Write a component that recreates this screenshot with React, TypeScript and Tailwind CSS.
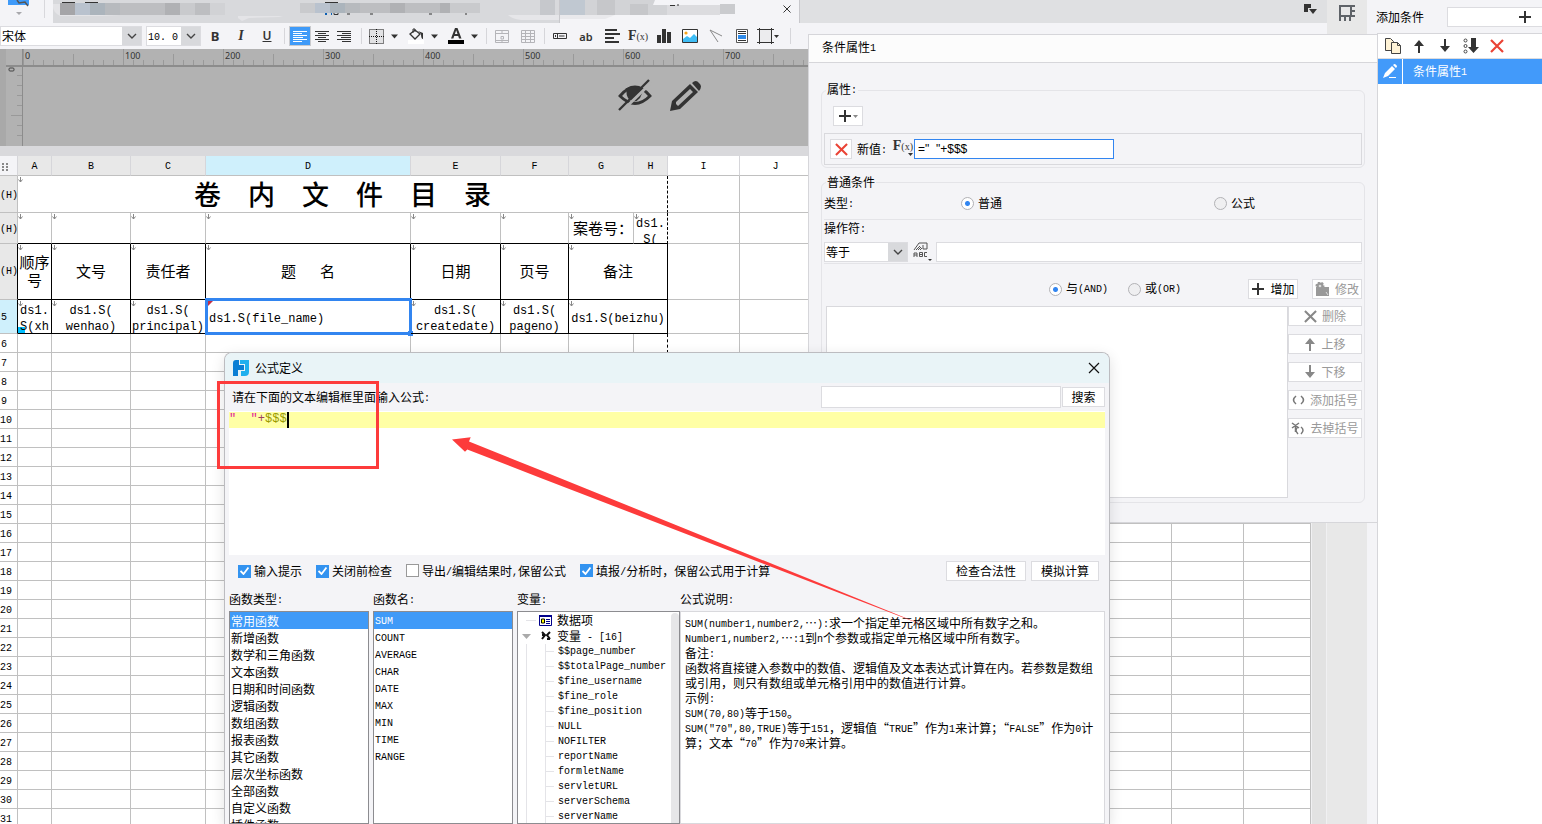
import { useState } from "react";
import type { ReactNode } from "react";

const columns = ["A", "B", "C", "D", "E", "F", "G", "H", "I", "J", "", "", "", "", "", "", ""];
const columnWidths = [34, 79, 75, 205, 90, 68, 65, 34, 72, 72, 72, 72, 72, 72, 72, 72];
const plainRows = Array.from({ length: 26 }, (_, i) => i + 6);

const categories = [
  "常用函数",
  "新增函数",
  "数学和三角函数",
  "文本函数",
  "日期和时间函数",
  "逻辑函数",
  "数组函数",
  "报表函数",
  "其它函数",
  "层次坐标函数",
  "全部函数",
  "自定义函数",
  "插件函数",
];

const functionNames = ["SUM", "COUNT", "AVERAGE", "CHAR", "DATE", "MAX", "MIN", "TIME", "RANGE"];

const variables = [
  "$$page_number",
  "$$totalPage_number",
  "$fine_username",
  "$fine_role",
  "$fine_position",
  "NULL",
  "NOFILTER",
  "reportName",
  "formletName",
  "servletURL",
  "serverSchema",
  "serverName",
];

const description = [
  "SUM(number1,number2,…):求一个指定单元格区域中所有数字之和。",
  "Number1,number2,…:1到n个参数或指定单元格区域中所有数字。",
  "备注:",
  "函数将直接键入参数中的数值、逻辑值及文本表达式计算在内。若参数是数组",
  "或引用，则只有数组或单元格引用中的数值进行计算。",
  "示例:",
  "SUM(70,80)等于150。",
  "SUM(\"70\",80,TRUE)等于151，逻辑值“TRUE”作为1来计算；“FALSE”作为0计",
  "算；文本“70”作为70来计算。",
];

// Latin runs go in a half-width monospace face, the rest stays in the CJK one
function Mix({ text }: { text: string }) {
  return (
    <>
      {text.split(/([\x20-\x7e]+)/).map((part, i) =>
        i % 2 ? (
          <span key={i} className="align-[1px] font-['Liberation_Mono',monospace] text-[10px]">
            {part}
          </span>
        ) : (
          part
        ),
      )}
    </>
  );
}

function Chevron() {
  return (
    <svg width="10" height="6" viewBox="0 0 10 6" fill="none" stroke="#444" strokeWidth="1.4">
      <path d="M1 1l4 4 4-4" />
    </svg>
  );
}

function Caret() {
  return (
    <svg width="7" height="5" viewBox="0 0 7 5" fill="#333">
      <path d="M0 .5h7L3.500 4.500z" />
    </svg>
  );
}

function ArrowIcon({ down, color }: { down?: boolean; color: string }) {
  return (
    <svg width="12" height="14" viewBox="0 0 12 14" fill={color}>
      {down ? <path d="M5 0h2v7h4L6 13 1 7h4z" /> : <path d="M5 14h2V7h4L6 1 1 7h4z" />}
    </svg>
  );
}

function CrossIcon({ color, size }: { color: string; size: number }) {
  return (
    <svg width={size} height={size} viewBox="0 0 14 14" fill="none" stroke={color} strokeWidth="2.200">
      <path d="M1 1l12 12M13 1L1 13" />
    </svg>
  );
}

function PlusIcon() {
  return (
    <svg width="14" height="14" viewBox="0 0 14 14" fill="#333">
      <path d="M6 1h2v5h5v2H8v5H6V8H1V6h5z" />
    </svg>
  );
}

function FxIcon() {
  return (
    <span className="flex items-baseline font-['Liberation_Serif',serif] leading-none text-[#333]">
      <b className="text-sm leading-none">F</b>
      <span className="text-[10px] leading-none">(x)</span>
    </span>
  );
}

function CellMark() {
  return (
    <svg className="absolute left-0 top-px" width="5" height="6" viewBox="0 0 5 6" fill="none" stroke="#888">
      <path d="M2.500 0v5M.5 2.500l2 2.500 2-2.500" />
    </svg>
  );
}

function Separator({ className }: { className: string }) {
  return <span className={`h-4 w-px shrink-0 bg-[#d6d6da] ${className}`} />;
}

function Tool({ label, children }: { label: string; children: ReactNode }) {
  return (
    <button aria-label={label} className="flex h-5 w-[26px] shrink-0 items-center justify-center">
      {children}
    </button>
  );
}

function DropTool({ label, children }: { label: string; children: ReactNode }) {
  return (
    <button aria-label={label} className="flex h-5 w-9 shrink-0 items-center">
      <span className="flex w-5 justify-center">{children}</span>
      <span className="flex w-4 justify-center">
        <Caret />
      </span>
    </button>
  );
}

function Combo({ label, value, latin, className }: { label: string; value: string; latin?: boolean; className: string }) {
  return (
    <div className={`relative h-5 shrink-0 border border-[#dcdce0] bg-white ${className}`}>
      <select
        aria-label={label}
        className={`h-full w-full appearance-none bg-transparent pl-px outline-none ${
          latin ? "font-['Liberation_Mono',monospace] text-[10px]" : "text-xs"
        }`}
      >
        <option>{value}</option>
      </select>
      <span className="pointer-events-none absolute inset-y-0 right-0 flex w-[19px] items-center justify-center bg-[#d8d9dc]">
        <Chevron />
      </span>
    </div>
  );
}

function TabStrip() {
  return (
    <div className="flex h-[23px] shrink-0 bg-[#dfe0e2]">
      <div className="w-[53px] bg-[#f4f4f7]">
        <svg width="53" height="23" viewBox="0 0 53 23">
          <path d="M8 0h21v5H8z" fill="#3f9af8" />
          <path d="M17 0l2 3 6-1 3 4" fill="none" stroke="#555" strokeWidth="1.500" />
          <path d="M16 12h6l-3 3z" fill="#a8a8ac" />
          <path d="M44 0h1v18h-1z" fill="#d8d8dc" />
        </svg>
      </div>
      <div className="w-[507px] border-r border-[#c8c8cc] bg-[#d8d9dc]">
        <svg width="506" height="23" viewBox="53 0 506 23">
          <path d="M53 4h7v11h40l20 1H60q-7-4-7-9z" fill="#e4e4e7" />
          <path d="M62 2h13v1H62zM85 2h13v1H85zM325 2h13v1H325z" fill="#333" />
          <path d="M325 13h2v2h-2zM331 13h1v2h-1z" fill="#0a5fb4" />
          <path d="M334 13v1.500h4V13M347 14h3M370 14h3M429 14h3M466 13v2" stroke="#333" fill="none" />
          <path d="M238 16h45l-4 1-30 1-7 3-4-3z" fill="#e4e4e7" />
          <path d="M60 3h15v12H60z" fill="#a5a5a8" />
          <path d="M75 3h15v12H75zM315 3h15v10H315z" fill="#b9c2ce" />
          <path d="M90 3h15v12H90zM330 3h15v10H330z" fill="#abb4bc" />
          <path d="M105 3h15v12H105zM345 3h15v10H345z" fill="#b7babe" />
          <path d="M120 3h45v12H120zM195 3h15v12H195zM360 3h30v10H360zM405 3h35v10H405z" fill="#bdbec1" />
          <path d="M165 3h15v12H165zM390 3h15v10H390zM440 3h10v10H440z" fill="#b0b1b4" />
          <path d="M180 3h15v12H180zM300 3h15v10H300zM450 3h30v10H450z" fill="#c9cacd" />
          <path d="M210 3h15v12H210z" fill="#d1d2d5" />
          <path d="M540 0h15v15H540z" fill="#c6c8cc" />
          <path d="M508 15h51v5h-38q-9-1-13-5z" fill="#e6e6e9" />
        </svg>
      </div>
      <div className="flex w-[240px] border-r border-[#c8c8cc] bg-[#f4f4f7]">
        <svg width="223" height="23" viewBox="560 0 223 23">
          <path d="M560 0h95l-2 5h14v10H560z" fill="#d2d3d6" />
          <path d="M560 0h25v15h-25z" fill="#c0c8d1" />
          <path d="M597 0h18v15h-18zM630 4h18v11h-18z" fill="#c6c7ca" />
          <path d="M667 5h53v10h-53z" fill="#dcdcdf" />
          <path d="M720 4h15v10h-15z" fill="#cacbce" />
          <path d="M560 15h55l-10 4h-45z" fill="#e9e9ec" />
          <path d="M670 5.500h5M678 4v2" stroke="#333" />
        </svg>
        <button aria-label="关闭标签" className="flex h-[18px] items-center">
          <svg width="8" height="8" viewBox="0 0 8 8" fill="none" stroke="#333">
            <path d="M.5.5l7 7M7.500.5l-7 7" />
          </svg>
        </button>
      </div>
      <button aria-label="标签列表" className="ml-auto mr-[10px] flex h-[18px] items-center">
        <svg width="13" height="11" viewBox="0 0 13 11" fill="#333">
          <path d="M0 0h7v4H4v4H0z" />
          <path d="M5 5h8L9 10z" />
        </svg>
      </button>
    </div>
  );
}

function Toolbar() {
  return (
    <div className="flex h-[26px] shrink-0 items-center bg-[#f4f4f7]">
      <Combo label="字体" value="宋体" className="w-[142px]" />
      <Combo label="字号" value="10. 0" latin className="ml-1 mr-px w-[55px]" />
      <Tool label="加粗">
        <b className="font-['Noto_Sans',sans-serif] text-[13px] leading-none text-[#333]">B</b>
      </Tool>
      <Tool label="斜体">
        <i className="font-['Liberation_Serif',serif] text-sm font-bold leading-none text-[#333]">I</i>
      </Tool>
      <Tool label="下划线">
        <u className="font-['Noto_Sans',sans-serif] text-xs font-semibold leading-none text-[#333]">U</u>
      </Tool>
      <Separator className="ml-1 mr-1" />
      <button aria-label="左对齐" className="flex h-5 w-[22px] items-center justify-center border border-[#c9cacd] bg-[#3f9af8]">
        <svg width="14" height="11" viewBox="0 0 14 11" stroke="#fff">
          <path d="M0 .5h14M0 2.500h9M0 4.500h14M0 6.500h10M0 8.500h14M0 10.500h9" />
        </svg>
      </button>
      <button aria-label="居中" className="flex h-5 w-[22px] items-center justify-center">
        <svg width="14" height="11" viewBox="0 0 14 11" stroke="#333">
          <path d="M0 .5h14M3 2.500h8M0 4.500h14M3 6.500h8M0 8.500h14M3 10.500h8" />
        </svg>
      </button>
      <button aria-label="右对齐" className="flex h-5 w-[22px] items-center justify-center">
        <svg width="14" height="11" viewBox="0 0 14 11" stroke="#333">
          <path d="M0 .5h14M5 2.500h9M0 4.500h14M4 6.500h10M0 8.500h14M5 10.500h9" />
        </svg>
      </button>
      <Separator className="ml-[6px] mr-1" />
      <div className="flex gap-1">
        <DropTool label="边框">
          <svg width="15" height="15" viewBox="0 0 15 15" fill="#e2e2e4" stroke="#111" strokeDasharray="1 1">
            <path d="M.5.5h14v14H.5zM7.500 0v15M0 7.500h15" />
          </svg>
        </DropTool>
        <DropTool label="填充颜色">
          <svg width="16" height="16" viewBox="0 0 16 16">
            <path d="M0 12h16v4H0z" fill="#fff" />
            <path d="M2 6l5-4 5 4-5 5z" fill="#f4f4f7" stroke="#333" strokeWidth="1.300" />
            <path d="M5 5V1h2v3" fill="none" stroke="#333" />
            <path d="M10 3l5 2v6q-2 0-2-5z" fill="#333" />
          </svg>
        </DropTool>
        <DropTool label="字体颜色">
          <svg width="16" height="16" viewBox="0 0 16 16" fill="#333">
            <path d="M0 12h16v4H0z" fill="#000" />
            <path fillRule="evenodd" d="M3 10.500L7 0h2.500l4 10.500H11L10.200 8H6.200l-.8 2.500zM6.900 6h2.600L8.200 2.200z" />
          </svg>
        </DropTool>
      </div>
      <Separator className="ml-1 mr-[2px]" />
      <Tool label="合并单元格">
        <svg width="14" height="13" viewBox="0 0 14 13" fill="none" stroke="#b4b4b8">
          <path d="M.5.5h13v12H.5zM0 3.500h14M0 10.500h14M7 0v4M7 10v3" />
          <path d="M6 6.500h2.500V9H6z" />
        </svg>
      </Tool>
      <Tool label="拆分单元格">
        <svg width="14" height="13" viewBox="0 0 14 13" fill="none" stroke="#b4b4b8">
          <path d="M.5.5h13v12H.5zM0 3.500h14M0 6.500h14M0 9.500h14M4.500 0v13M9.500 0v13" />
        </svg>
      </Tool>
      <Separator className="ml-[3px] mr-[2px]" />
      <Tool label="数据列">
        <svg width="14" height="6" viewBox="0 0 14 6" fill="none" stroke="#333">
          <path d="M.5.5h13v5H.5zM4.500 1v4M6 3h5.500M2.500 2v2" />
        </svg>
      </Tool>
      <Tool label="普通文本">
        <span className="font-['Noto_Sans',sans-serif] text-[11px] font-semibold leading-none text-[#333]">ab</span>
      </Tool>
      <Tool label="富文本">
        <svg width="15" height="14" viewBox="0 0 15 14" stroke="#333" strokeWidth="2">
          <path d="M0 1h12M0 5h15M0 9h9M0 13h14" />
        </svg>
      </Tool>
      <Tool label="公式">
        <FxIcon />
      </Tool>
      <Tool label="图表">
        <svg width="14" height="14" viewBox="0 0 14 14" fill="#333">
          <path d="M0 6h4v8H0zM5 0h4v14H5zM10 3h4v11h-4z" />
        </svg>
      </Tool>
      <Tool label="图片">
        <svg width="16" height="14" viewBox="0 0 16 14">
          <path d="M.5.5h15v13H.5z" fill="#fff" stroke="#333" />
          <path d="M1 10l4-3 3 2 4-4 3 3v5H1z" fill="#3fbdf5" />
          <circle cx="4" cy="4" r="1.600" fill="#f7a51c" />
        </svg>
      </Tool>
      <Tool label="斜线">
        <svg width="14" height="14" viewBox="0 0 14 14" fill="none" stroke="#888">
          <path d="M1 1l12 6M1 1l8 12" />
        </svg>
      </Tool>
      <Tool label="子报表">
        <svg width="12" height="14" viewBox="0 0 12 14">
          <path d="M.5.5h11v13H.5z" fill="#fff" stroke="#555" />
          <path d="M2 2.500h8M2 4.500h8M2 11.500h8" stroke="#333" />
          <path d="M2 6h8v4H2z" fill="#2f8ae8" />
        </svg>
      </Tool>
      <Tool label="悬浮元素">
        <svg width="22" height="16" viewBox="0 0 22 16">
          <path d="M2.500 1.500h12v13h-12z" fill="#ececee" stroke="#333" />
          <path d="M0 1.500h17M0 14.500h17M2.500 0v16M14.500 0v16" stroke="#333" />
          <path d="M17 7h5l-2.500 3z" fill="#333" />
        </svg>
      </Tool>
      <Separator className="ml-[9px]" />
    </div>
  );
}

function Ruler() {
  return (
    <div className="flex h-[97px] shrink-0 bg-[#b2b2b2]">
      <div className="w-[6px] bg-[#a9a9a9]" />
      <div className="flex w-[17px] flex-col border-r border-[#8c8c8c] pt-4">
        <div className="border-t-2 border-[#8c8c8c]">
          <svg width="16" height="79" viewBox="0 0 16 79">
            <rect x="3" y="1" width="5" height="3" rx="1" fill="none" stroke="#444" />
            <path d="M11 8.500h5M11 18.500h5M11 28.500h5M11 38.500h5M5 48.500h11M11 58.500h5M11 68.500h5" stroke="#999" />
          </svg>
        </div>
      </div>
      <div className="min-w-0 flex-1">
        <div className="flex h-[18px] overflow-hidden border-b-2 border-[#8c8c8c]">
          {[0, 100, 200, 300, 400, 500, 600, 700].map((n) => (
            <div key={n} className="relative w-[100px] shrink-0">
              <svg width="100" height="16" viewBox="1 0 100 16" stroke="#999">
                <path d="M1.500 0v16M51.500 5v11M11.500 11v5M21.500 11v5M31.500 11v5M41.500 11v5M61.500 11v5M71.500 11v5M81.500 11v5M91.500 11v5" />
              </svg>
              <span className="absolute left-[2px] top-[2px] font-['Noto_Sans',sans-serif] text-[9px] leading-[10px] text-[#333]">{n}</span>
            </div>
          ))}
        </div>
        <div className="flex items-center gap-[18px] pl-[595px] pt-3">
          <svg width="34" height="33" viewBox="0 0 34 33" fill="none" stroke="#333">
            <path d="M2 17Q17 -1 32 17Q17 32 2 17z" strokeWidth="2.800" />
            <path d="M7 10q9-6 19 0l-4 9q-5 6-10 2-5-4-3-11z" fill="#333" stroke="none" />
            <path d="M3.500 32.500L33.500 3.500" stroke="#b2b2b2" strokeWidth="3" />
            <path d="M1 31L31 1" strokeWidth="2.300" />
          </svg>
          <svg width="32" height="32" viewBox="0 0 32 32" fill="#333">
            <path fillRule="evenodd" d="M0 31l2-10L20 4l8 8L10 29zM6 24l2 2L23 12l-3-3L6 22z" />
            <path d="M22 3q4-4 7 0 4 3 0 8z" />
          </svg>
        </div>
      </div>
    </div>
  );
}

const headCell = "h-5 border-b border-r border-b-[#c0c0c0] border-r-[#d6d6da] p-0 pt-[3px] text-center font-normal";
const rowHead = "border-b border-r border-[#c0c0c0] p-0 pt-1 text-left font-normal";
const gridCell = "border-b border-r border-[#c0c0c0] p-0";
const boldCell = "relative border-b border-r border-black p-0";
const topCell = "relative border-b border-r border-b-black border-r-[#c0c0c0] p-0";

function Blank({ count }: { count: number }) {
  return (
    <>
      {Array.from({ length: count }, (_, i) => (
        <td key={i} className={gridCell} />
      ))}
    </>
  );
}

function FieldCell({ lines }: { lines: string[] }) {
  return (
    <td className={boldCell}>
      <CellMark />
      <div className="h-[33px] overflow-hidden pt-[3px] text-center text-xs leading-4">
        {lines.map((line) => (
          <div key={line}>{line}</div>
        ))}
      </div>
    </td>
  );
}

function Sheet() {
  return (
    <table className="w-full table-fixed border-separate border-spacing-0 bg-white font-['Liberation_Mono','Noto_Sans_CJK_SC',monospace] text-[10px] leading-none">
      <colgroup>
        <col className="w-[18px]" />
        {columnWidths.map((width, i) => (
          <col key={i} style={{ width }} />
        ))}
        <col />
      </colgroup>
      <thead>
        <tr>
          <th className={`${headCell} bg-[#f4f4f7]`}>
            <svg width="6" height="8" viewBox="0 0 6 8" fill="#888" className="ml-[2px]">
              <path d="M0 0h2v2H0zM4 0h2v2H4zM0 3h2v2H0zM4 3h2v2H4zM0 6h2v2H0zM4 6h2v2H4z" />
            </svg>
          </th>
          {columns.map((name, i) => (
            <th key={i} className={`${headCell} ${name === "D" ? "bg-[#cff0fc]" : i < 8 ? "bg-[#e8e8e8]" : "bg-white"}`}>
              {name}
            </th>
          ))}
        </tr>
      </thead>
      <tbody>
        <tr className="h-[37px]">
          <th className={`${rowHead} bg-[#e8e8e8]`}>(H)</th>
          <td colSpan={8} className="relative border-b border-r border-dashed border-b-[#c0c0c0] border-r-black p-0 [border-bottom-style:solid]">
            <CellMark />
            <div className="h-9 overflow-hidden whitespace-pre pt-1 text-center text-[27px] font-medium leading-9">卷　内　文　件　目　录</div>
          </td>
          <Blank count={9} />
        </tr>
        <tr className="h-[31px]">
          <th className={`${rowHead} bg-[#e8e8e8]`}>(H)</th>
          {[0, 1, 2, 3, 4, 5].map((i) => (
            <td key={i} className={topCell}>
              <CellMark />
            </td>
          ))}
          <td className={`${topCell} whitespace-nowrap pl-1 pt-1 text-[15px]`}>
            <CellMark />
            案卷号：
          </td>
          <td className="relative border-b border-r border-dashed border-black p-0 [border-bottom-style:solid]">
            <CellMark />
            <div className="h-[30px] overflow-hidden pt-[3px] text-center text-xs leading-4">
              <div>ds1.</div>
              <div>S(</div>
            </div>
          </td>
          <Blank count={9} />
        </tr>
        <tr className="h-14 text-center text-[15px] leading-[18px]">
          <th className="border-b border-r border-b-[#c0c0c0] border-r-black bg-[#e8e8e8] p-0 text-left text-[10px] font-normal">(H)</th>
          {["顺序号", "文号", "责任者", "题 名", "日期", "页号"].map((title) => (
            <td key={title} className={`${boldCell} pt-1`}>
              <CellMark />
              {title === "题 名" ? (
                <div className="flex justify-center gap-6">
                  <span>题</span>
                  <span>名</span>
                </div>
              ) : (
                title
              )}
            </td>
          ))}
          <td colSpan={2} className={`${boldCell} pt-1`}>
            <CellMark />
            备注
          </td>
          <Blank count={9} />
        </tr>
        <tr className="h-[34px]">
          <th className="border-b border-r border-b-[#c0c0c0] border-r-black bg-[#cff0fc] p-0 pl-px pt-[3px] text-left font-normal">5</th>
          <td className={boldCell}>
            <CellMark />
            <span className="absolute bottom-0 left-0 h-[6px] w-[7px] bg-[#00bfff]" />
            <div className="relative h-[33px] overflow-hidden pt-[3px] text-center text-xs leading-4">
              <div>ds1.</div>
              <div>S(xh</div>
            </div>
          </td>
          <FieldCell lines={["ds1.S(", "wenhao)"]} />
          <FieldCell lines={["ds1.S(", "principal)"]} />
          <td className={`${boldCell} pl-[3px] pt-1 text-left text-xs`}>
            ds1.S(file_name)
            <svg className="absolute left-[2px] top-[1px]" width="5" height="5" viewBox="0 0 5 5">
              <path d="M0 0h5L0 5z" fill="#c22f46" />
            </svg>
            <span className="absolute -bottom-[2px] -left-px -right-[2px] -top-[2px] border-[3px] border-[#3285f0]" />
            <span className="absolute -bottom-[3px] -right-[3px] h-[5px] w-[5px] bg-[#3285f0]" />
          </td>
          <FieldCell lines={["ds1.S(", "createdate)"]} />
          <FieldCell lines={["ds1.S(", "pageno)"]} />
          <td colSpan={2} className={`${boldCell} pt-1 text-center text-xs`}>
            <CellMark />
            ds1.S(beizhu)
          </td>
          <Blank count={9} />
        </tr>
        {plainRows.map((n) => (
          <tr key={n} className="h-[19px]">
            <th className={`${rowHead} ${n < 10 ? "pl-px" : ""}`}>{n}</th>
            <Blank count={7} />
            <td className="border-b border-r border-dashed border-b-[#c0c0c0] border-r-black p-0 [border-bottom-style:solid]" />
            <Blank count={9} />
          </tr>
        ))}
      </tbody>
    </table>
  );
}

function Radio({ name, label, checked }: { name: string; label: string; checked?: boolean }) {
  return (
    <label className="flex items-center gap-1">
      <input
        type="radio"
        name={name}
        defaultChecked={checked}
        className="h-[13px] w-[13px] appearance-none rounded-full border border-[#b2b2b6] bg-[#efeff1] checked:bg-[radial-gradient(circle,#3285f0_0_2px,#fff_3px)]"
      />
      <span className="leading-4">
        <Mix text={label} />
      </span>
    </label>
  );
}

const smallButton = "flex h-5 items-center justify-center gap-[5px] border border-[#dcdce0] bg-white";

function ConditionPanel() {
  return (
    <section className="absolute right-[164px] top-[34px] w-[570px] border border-[#d6d6da] bg-[#f4f4f7] pb-[19px]">
      <h2 className="h-[28px] border-b border-[#d6d6da] bg-[#fcfcfc] pl-[13px] leading-6">
        条件属性<Mix text="1" />
      </h2>
      <div className="px-3 pt-[18px]">
        <fieldset className="rounded-md border border-[#e4e4e8] pb-[2px] pl-[2px] pr-[2px]">
          <legend className="ml-[2px] px-px leading-4">
            属性<Mix text=":" />
          </legend>
          <button aria-label="添加属性" className={`${smallButton} ml-[9px] mt-[7px] w-[30px]`}>
            <PlusIcon />
            <svg width="5" height="3" viewBox="0 0 5 3" fill="#888" className="-ml-1">
              <path d="M0 0h5L2.500 3z" />
            </svg>
          </button>
          <div className="mt-[7px] flex h-8 items-center border border-[#d9d9dd] pl-[5px]">
            <button aria-label="删除属性" className={`${smallButton} w-[22px]`}>
              <CrossIcon color="#ea4335" size={13} />
            </button>
            <label htmlFor="newValue" className="ml-[5px] w-[35px]">
              新值<Mix text=":" />
            </label>
            <button aria-label="插入公式" className="mr-px flex h-5 w-[21px] flex-col items-end">
              <FxIcon />
              <svg width="5" height="3" viewBox="0 0 5 3" fill="#333">
                <path d="M0 0h5L2.500 3z" />
              </svg>
            </button>
            <input
              id="newValue"
              defaultValue={'="  "+$$$'}
              className="h-5 w-[200px] border border-[#3285f0] bg-white px-[3px] font-['Liberation_Sans',sans-serif] text-xs outline-none"
            />
          </div>
        </fieldset>
        <fieldset className="mt-[6px] rounded-md border border-[#e4e4e8] pb-1 pl-[2px] pr-[2px]">
          <legend className="ml-[2px] px-px leading-4">普通条件</legend>
          <div className="flex h-[30px] items-center border-b border-[#e4e4e8] pb-[3px]">
            <span className="w-[137px]">
              类型<Mix text=":" />
            </span>
            <span className="w-[253px]">
              <Radio name="kind" label="普通" checked />
            </span>
            <Radio name="kind" label="公式" />
          </div>
          <div className="h-[22px] leading-4">
            操作符<Mix text=":" />
          </div>
          <div className="flex h-[22px] border-b border-[#e4e4e8]">
            <Combo label="操作符" value="等于" className="w-[84px]" />
            <button aria-label="值类型" className="mx-1 flex w-5 justify-center">
              <svg width="19" height="20" viewBox="0 0 19 20" fill="none" stroke="#555">
                <path d="M1 8l5-7h8v6h-4V3M3 8l4-4M5 8l3-3M7 8l2-2" />
                <path d="M1 15v-4h3v4M1 13h3M6.500 10.500h3v4h-3zM6.500 12.500h3M14 10.500h-2.500v4H14" />
                <path d="M15 17h4l-2 2z" fill="#333" stroke="none" />
              </svg>
            </button>
            <input aria-label="比较值" className="h-5 min-w-0 flex-1 border border-[#dcdce0] bg-white px-1 outline-none" />
          </div>
          <div className="flex h-[42px] items-center gap-5 pl-[225px] pt-2">
            <Radio name="join" label="与(AND)" checked />
            <Radio name="join" label="或(OR)" />
            <div className="ml-auto flex gap-[14px]">
              <button className={`${smallButton} w-[50px]`}>
                <PlusIcon />
                增加
              </button>
              <button className={`${smallButton} w-[50px] text-[#999]`}>
                <svg width="15" height="14" viewBox="0 0 15 14" fill="#999">
                  <path d="M1 5h13v9H1z" />
                  <circle cx="5" cy="4" r="3.500" stroke="#999" strokeDasharray="2 1.500" strokeWidth="2" />
                  <circle cx="5" cy="4" r="1.300" fill="#ddd" />
                  <path d="M11 10l2 3" stroke="#ddd" />
                </svg>
                修改
              </button>
            </div>
          </div>
          <div className="flex pl-[2px]">
            <div className="h-[192px] flex-1 border border-[#d9d9dd] bg-white" />
            <div className="flex w-[74px] flex-col gap-2 text-[#999]">
              <button className={smallButton}>
                <CrossIcon color="#888" size={13} />
                删除
              </button>
              <button className={smallButton}>
                <ArrowIcon color="#888" />
                上移
              </button>
              <button className={smallButton}>
                <ArrowIcon color="#888" down />
                下移
              </button>
              <button className={smallButton}>
                <svg width="13" height="10" viewBox="0 0 13 10" fill="none" stroke="#777" strokeWidth="1.600">
                  <path d="M4 1Q-1 5 4 9M9 1q5 4 0 8" />
                </svg>
                添加括号
              </button>
              <button className={smallButton}>
                <svg width="14" height="13" viewBox="0 0 14 13" fill="none" stroke="#777" strokeWidth="1.500">
                  <path d="M7 5q-4 3 0 7M10 5q4 3 0 7M1 1l7 5M8 1L1 6M4.500 3v7" />
                </svg>
                去掉括号
              </button>
            </div>
          </div>
        </fieldset>
      </div>
    </section>
  );
}

function Check({ label, checked }: { label: string; checked?: boolean }) {
  return (
    <label className="flex items-center gap-[3px] whitespace-nowrap">
      <input
        type="checkbox"
        defaultChecked={checked}
        className="peer h-[13px] w-[13px] appearance-none border border-[#999] bg-white checked:border-[#3393f0] checked:bg-[#3393f0]"
      />
      <svg width="9" height="8" viewBox="0 0 9 8" className="pointer-events-none -ml-[14px] mr-[2px] opacity-0 peer-checked:opacity-100" fill="none" stroke="#fff" strokeWidth="1.800">
        <path d="M.5 4L3.500 7l5-6.500" />
      </svg>
      <span>
        <Mix text={label} />
      </span>
    </label>
  );
}

function Column({ title, className, children }: { title: string; className: string; children: ReactNode }) {
  return (
    <div className={`flex flex-col ${className}`}>
      <h3 className="h-6 shrink-0 leading-6">
        {title}
        <Mix text=":" />
      </h3>
      {children}
    </div>
  );
}

function PickList({ items }: { items: string[] }) {
  const [picked, setPicked] = useState(items[0]);
  return (
    <ul className="flex-1 overflow-hidden border border-[#8c8c90] bg-white">
      {items.map((item) => (
        <li key={item}>
          <button
            onClick={() => setPicked(item)}
            className={`block h-[17px] w-full pl-px text-left leading-[15px] ${picked === item ? "bg-[#3f9af8] text-white" : "text-black"}`}
          >
            <Mix text={item} />
          </button>
        </li>
      ))}
    </ul>
  );
}

function FormulaDialog() {
  return (
    <section className="absolute bottom-0 left-[224px] top-[352px] flex w-[886px] flex-col overflow-hidden rounded-t-lg border border-b-0 border-[#bcbcc0] bg-[#f4f4f7] shadow-[0_4px_14px_rgba(0,0,0,0.12)]">
      <header className="flex h-[30px] shrink-0 items-center bg-[#e9f4f7] pb-px pl-2 pr-[9px]">
        <svg width="16" height="16" viewBox="0 0 16 16">
          <path d="M3 0h3v5h5v5H5v6H0V3q0-3 3-3z" fill="#0b7fd4" />
          <path d="M7 0h9v12q0 4-4 4H8v-5h4V4H7z" fill="#1fb0ee" />
        </svg>
        <h1 className="ml-[6px]">公式定义</h1>
        <button aria-label="关闭" className="ml-auto">
          <svg width="12" height="12" viewBox="0 0 12 12" fill="none" stroke="#111" strokeWidth="1.200">
            <path d="M1 1l10 10M11 1L1 11" />
          </svg>
        </button>
      </header>
      <div className="flex min-h-0 flex-1 flex-col px-1">
        <div className="flex h-[28px] shrink-0 items-center pl-[3px]">
          <label htmlFor="formula">
            请在下面的文本编辑框里面输入公式<Mix text=":" />
          </label>
          <input aria-label="搜索内容" className="ml-auto h-[22px] w-[240px] border border-[#dcdce0] bg-white px-1 outline-none" />
          <button className={`${smallButton} ml-px w-[43px]`}>搜索</button>
        </div>
        {/* the highlighted line lies over the plain text box */}
        <div className="relative h-[144px] shrink-0">
          <textarea id="formula" className="h-full w-full resize-none bg-white outline-none" />
          <div className="pointer-events-none absolute left-0 right-0 top-px flex h-4 whitespace-pre bg-[#ffffa5] font-['Liberation_Mono',monospace] text-xs leading-[14px]">
            <span className="text-[#e0189a]">{'"  "'}</span>
            <span className="text-[#a04060]">+</span>
            <span className="text-[#999900]">$$$</span>
            <span className="w-[2px] bg-black" />
          </div>
        </div>
        <div className="flex h-8 shrink-0 items-center gap-[14px] pl-[9px] pr-[6px]">
          <Check label="输入提示" checked />
          <Check label="关闭前检查" checked />
          <Check label="导出/编辑结果时,保留公式" />
          <Check label="填报/分析时，保留公式用于计算" checked />
          <div className="ml-auto flex gap-[5px]">
            <button className={`${smallButton} w-20`}>检查合法性</button>
            <button className={`${smallButton} w-[68px]`}>模拟计算</button>
          </div>
        </div>
        <div className="flex min-h-0 flex-1">
          <Column title="函数类型" className="mr-1 w-[140px]">
            <PickList items={categories} />
          </Column>
          <Column title="函数名" className="mr-1 w-[140px]">
            <PickList items={functionNames} />
          </Column>
          <Column title="变量" className="w-[163px]">
            <div className="relative flex-1 overflow-hidden border border-[#8c8c90] bg-white">
              <div className="ml-2 flex h-4 items-center border-[#e4e4e8]">
                <span className="h-px w-[10px] bg-[#e4e4e8]" />
                <svg className="ml-[3px]" width="13" height="11" viewBox="0 0 13 11">
                  <path d="M.5.5h12v10H.5z" fill="#fff" stroke="#00008b" />
                  <path d="M0 0h13v2H0z" fill="#00008b" />
                  <path d="M2.500 4h3v4h-3z" fill="#ff0" stroke="#000" />
                  <path d="M7 4.500h4M7 6.500h4M7 8.500h4" stroke="#00008b" />
                </svg>
                <span className="ml-[5px]">数据项</span>
              </div>
              <div className="flex h-4 items-center pl-1">
                <svg width="9" height="5" viewBox="0 0 9 5" fill="#aaa">
                  <path d="M0 0h9L4.500 5z" />
                </svg>
                <svg className="ml-[10px]" width="10" height="10" viewBox="0 0 10 10" fill="none" stroke="#111" strokeWidth="2">
                  <path d="M1 1l3 3-3 4M9 1L6 4l3 4M1 4h2M6 8h3" />
                </svg>
                <span className="ml-[6px]">
                  变量
                  <Mix text=" - [16]" />
                </span>
              </div>
              <ul className="ml-2 border-l border-[#e4e4e8] pl-[18px]">
                {variables.map((name) => (
                  <li key={name} className="flex h-[15px] items-center border-l border-[#e4e4e8]">
                    <span className="mr-[4px] h-px w-2 shrink-0 bg-[#e4e4e8]" />
                    <Mix text={name} />
                  </li>
                ))}
              </ul>
              <span className="absolute bottom-0 right-0 top-px w-2 rounded-t-full bg-[#e6e6e8]" />
            </div>
          </Column>
          <Column title="公式说明" className="min-w-0 flex-1">
            <div lang="zh-CN" className="flex-1 overflow-hidden whitespace-nowrap border border-[#d9d9dd] bg-white pl-1 pt-[3px]">
              {description.map((line) => (
                <p key={line} className="h-[15px] leading-[15px]">
                  <Mix text={line} />
                </p>
              ))}
            </div>
          </Column>
        </div>
      </div>
    </section>
  );
}

function Sidebar() {
  return (
    <aside className="flex w-[175px] shrink-0 flex-col bg-[#f4f4f7]">
      <div className="flex h-[33px] items-center pl-[9px]">
        <span>添加条件</span>
        <button aria-label="添加条件" className="ml-[23px] flex h-5 flex-1 items-center justify-end border border-r-0 border-[#dcdce0] bg-white pr-[10px]">
          <PlusIcon />
        </button>
      </div>
      <div className="ml-[10px] flex-1 border-l border-t border-[#d6d6da] bg-white">
        <div className="flex h-[25px] items-center border-b border-[#dcdce0] pl-[6px]">
          <button aria-label="复制">
            <svg width="18" height="16" viewBox="0 0 18 16" fill="#fff3d6" stroke="#444">
              <path d="M1.500.5h5l3 3v9h-8z" />
              <path d="M7.500 4.500h6l3 3v8h-9z" />
              <path d="M13.500 4.500v3h3" fill="none" />
            </svg>
          </button>
          <button aria-label="上移" className="ml-[11px]">
            <ArrowIcon color="#333" />
          </button>
          <button aria-label="下移" className="ml-[14px]">
            <ArrowIcon color="#333" down />
          </button>
          <button aria-label="排序" className="ml-3">
            <svg width="16" height="16" viewBox="0 0 16 16" fill="none" stroke="#444">
              <circle cx="2.500" cy="2.500" r="1.500" />
              <circle cx="2.500" cy="8" r="1.500" />
              <circle cx="2.500" cy="13.500" r="1.500" />
              <path d="M8 0h5v9h3l-5.500 6L5 9h3z" fill="#333" stroke="none" />
            </svg>
          </button>
          <button aria-label="删除" className="ml-[11px]">
            <CrossIcon color="#ea4335" size={14} />
          </button>
        </div>
        <div className="flex h-[25px] items-center bg-[#429afa] text-white">
          <button aria-label="重命名" className="flex h-full w-[25px] items-center justify-center border-r border-white">
            <svg width="15" height="15" viewBox="0 0 15 15" fill="#fff">
              <path d="M0 14l2-5 7-7 3 3-7 7zM10 1q2-2 3 0 2 1 0 3zM6 13h7v1H6z" />
            </svg>
          </button>
          <span className="ml-[10px]">
            条件属性<Mix text="1" />
          </span>
        </div>
      </div>
    </aside>
  );
}

export default function App() {
  return (
    <div className="relative flex h-screen overflow-hidden bg-white font-['Noto_Sans_CJK_SC',sans-serif] text-xs text-black">
      <main className="flex min-w-0 flex-1 flex-col">
        <TabStrip />
        <Toolbar />
        <Ruler />
        <div className="h-[10px] shrink-0 bg-[#d9d9dc]" />
        <div className="flex min-h-0 flex-1">
          <div className="min-w-0 flex-1 overflow-hidden">
            <Sheet />
          </div>
          <div className="w-4 border-x border-[#f0f0f2] bg-[#e2e2e2]" />
        </div>
      </main>
      <div className="w-10 shrink-0 bg-[#e8e8e8] pl-3 pt-[5px]">
        <svg width="17" height="16" viewBox="0 0 17 16" fill="none" stroke="#5f6368" strokeWidth="2">
          <path d="M1 16V1h15M1 11h15M12 1v10M12 6h4M6 11v5M11 11v5" />
        </svg>
      </div>
      <Sidebar />
      <ConditionPanel />
      <FormulaDialog />
      <div className="pointer-events-none absolute left-[217px] top-[381px] h-[88px] w-[162px] border-[3px] border-[#fd3b3b]" />
      <svg className="pointer-events-none absolute left-[452px] top-[436px]" width="482" height="194" viewBox="452 436 482 194" fill="#fd3b3b">
        <path d="M452 439.600L470.700 437.300 469 441.500 540 470 933 629 540 477.700 467.300 449.600 465 451.700z" />
      </svg>
    </div>
  );
}
